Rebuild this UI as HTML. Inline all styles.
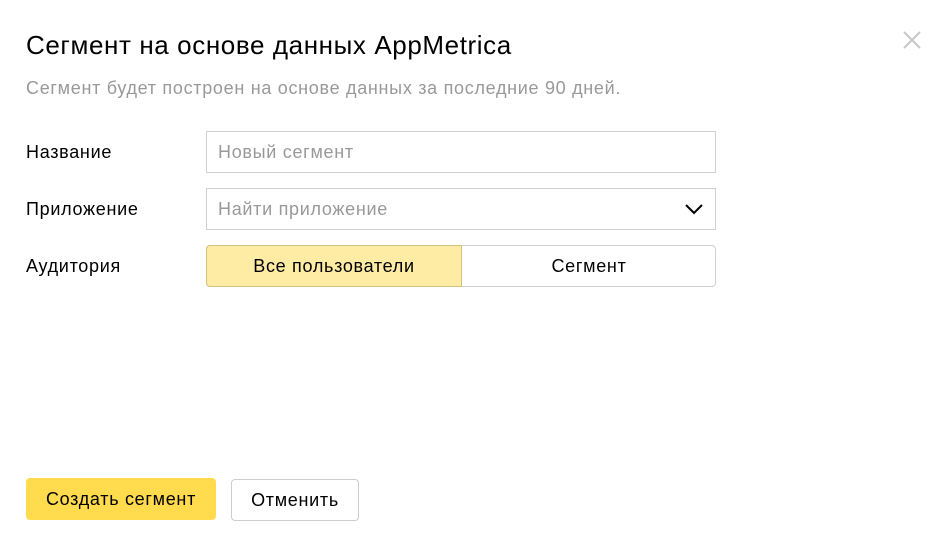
<!DOCTYPE html>
<html><head><meta charset="utf-8"><style>
body{margin:0;width:952px;height:548px;background:#fff;font-family:"Liberation Sans",sans-serif;position:relative;overflow:hidden;color:#000}
.a{position:absolute;white-space:nowrap}
.t{font-size:18px;letter-spacing:0.7px}
.box{position:absolute;box-sizing:border-box;border:1px solid #d0d0d0;background:#fff}
</style></head><body>
<div class="a" style="left:26px;top:30px;font-size:26px;letter-spacing:0.6px;color:#000">Сегмент на основе данных AppMetrica</div>
<svg class="a" style="left:902px;top:30px" width="20" height="20" viewBox="0 0 20 20"><path d="M2 2L18 18M18 2L2 18" stroke="#c8c8c8" stroke-width="2"/></svg>
<div class="a t" style="left:26px;top:78px;color:#999">Сегмент будет построен на основе данных за последние 90 дней.</div>
<div class="a t" style="left:26px;top:142px">Название</div>
<div class="a t" style="left:26px;top:199px">Приложение</div>
<div class="a t" style="left:26px;top:256px">Аудитория</div>
<div class="box" style="left:206px;top:131px;width:510px;height:42px"></div>
<div class="a t" style="left:218px;top:142px;color:#999">Новый сегмент</div>
<div class="box" style="left:206px;top:188px;width:510px;height:42px"></div>
<div class="a t" style="left:218px;top:199px;color:#999">Найти приложение</div>
<svg class="a" style="left:684px;top:203px" width="20" height="12" viewBox="0 0 20 12"><path d="M2 2L10 10L18 2" stroke="#000" stroke-width="2" fill="none"/></svg>
<div class="box" style="left:206px;top:245px;width:510px;height:42px;border-radius:4px"></div>
<div class="a t" style="left:206px;top:245px;width:256px;height:42px;box-sizing:border-box;background:#feeba4;border:1px solid #d3c27f;border-radius:4px 0 0 4px;text-align:center;line-height:40px">Все пользователи</div>
<div class="a t" style="left:462px;top:245px;width:254px;height:42px;text-align:center;line-height:42px">Сегмент</div>
<div class="a t" style="left:26px;top:478px;width:190px;height:42px;background:#ffdb4d;border-radius:4px;text-align:center;line-height:42px">Создать сегмент</div>
<div class="a t" style="left:231px;top:479px;width:128px;height:42px;box-sizing:border-box;border:1px solid #ccc;border-radius:4px;text-align:center;line-height:40px">Отменить</div>
</body></html>
